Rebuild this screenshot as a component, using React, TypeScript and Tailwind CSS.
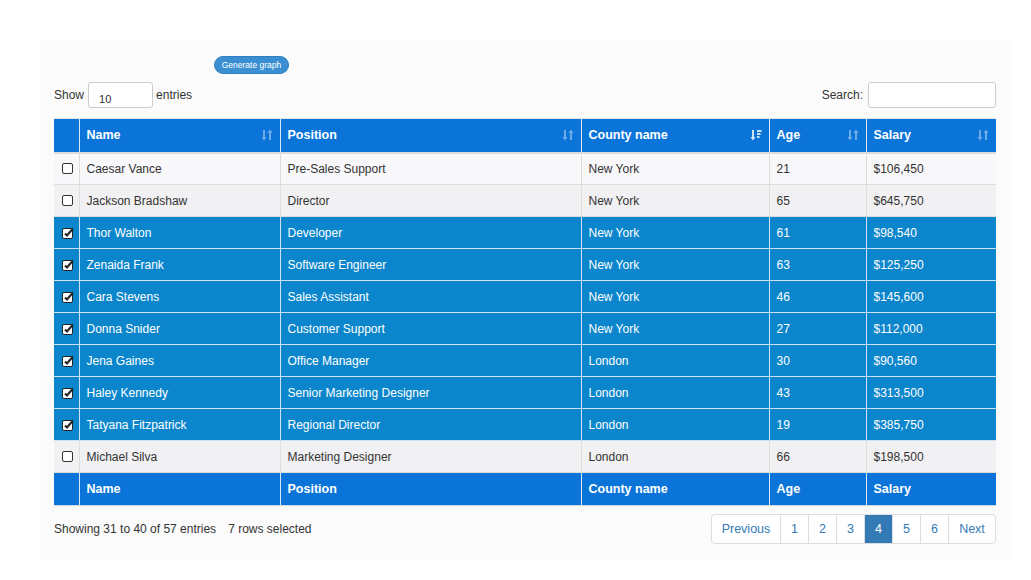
import React from "react";

type Row = { name: string; pos: string; county: string; age: string; salary: string; sel: boolean };

const rows: Row[] = [
  { name: "Caesar Vance", pos: "Pre-Sales Support", county: "New York", age: "21", salary: "$106,450", sel: false },
  { name: "Jackson Bradshaw", pos: "Director", county: "New York", age: "65", salary: "$645,750", sel: false },
  { name: "Thor Walton", pos: "Developer", county: "New York", age: "61", salary: "$98,540", sel: true },
  { name: "Zenaida Frank", pos: "Software Engineer", county: "New York", age: "63", salary: "$125,250", sel: true },
  { name: "Cara Stevens", pos: "Sales Assistant", county: "New York", age: "46", salary: "$145,600", sel: true },
  { name: "Donna Snider", pos: "Customer Support", county: "New York", age: "27", salary: "$112,000", sel: true },
  { name: "Jena Gaines", pos: "Office Manager", county: "London", age: "30", salary: "$90,560", sel: true },
  { name: "Haley Kennedy", pos: "Senior Marketing Designer", county: "London", age: "43", salary: "$313,500", sel: true },
  { name: "Tatyana Fitzpatrick", pos: "Regional Director", county: "London", age: "19", salary: "$385,750", sel: true },
  { name: "Michael Silva", pos: "Marketing Designer", county: "London", age: "66", salary: "$198,500", sel: false },
];

function SortIcon({ active }: { active?: boolean }) {
  return (
    <svg width="12" height="12" viewBox="0 0 12 12" className={active ? "opacity-80" : "opacity-40"}>
      <g fill="#ffffff">
        <rect x="2" y="1" width="2" height="8" />
        <polygon points="0.5,8 5.5,8 3,11.5" />
        {active ? (
          <>
            <rect x="7" y="1" width="4.5" height="2" />
            <rect x="7" y="4" width="3.5" height="2" />
            <rect x="7" y="7" width="2.5" height="2" />
          </>
        ) : (
          <>
            <rect x="8" y="3" width="2" height="8" />
            <polygon points="6.5,4 11.5,4 9,0.5" />
          </>
        )}
      </g>
    </svg>
  );
}

function Checkbox({ checked }: { checked: boolean }) {
  if (!checked)
    return <div className="w-[11px] h-[11px] border border-[#333] rounded-[2px] bg-white" />;
  return (
    <svg width="12" height="12" viewBox="0 0 12 12">
      <rect x="0.5" y="1.5" width="10" height="10" rx="1.5" fill="#ffffff" stroke="#222" strokeWidth="1" />
      <path d="M3 6.5 L5 8.5 L11 1.5" fill="none" stroke="#222" strokeWidth="2" />
    </svg>
  );
}

const cols = ["w-[25px]", "w-[201px]", "w-[301px]", "w-[188px]", "w-[97px]", "w-[130px]"];

export default function App() {
  const font = { fontFamily: '"Liberation Sans", Arial, Helvetica, sans-serif' };
  return (
    <div className="w-[1031px] h-[580px] bg-white pt-[40px] pl-[40px]" style={font}>
      <div className="w-[972px] h-[520px] bg-[#fbfbfb] pl-[14px] pt-[16px] text-[12px] text-[#333]">
        <div className="w-[942px]">
          <div className="h-[18px] flex">
            <button className="ml-[160px] h-[18px] w-[75px] rounded-full bg-[#3a8fd2] text-white text-[8.5px] leading-[16px] border border-[#2f7fc0]">
              Generate graph
            </button>
          </div>
          <div className="flex items-center justify-between h-[26px] mt-[8px]">
            <div className="flex items-center">
              <span>Show</span>
              <div className="ml-[4px] w-[65px] h-[26px] border border-[#ccc] rounded-[3px] bg-white text-[11px] pl-[10px] pt-[9px] leading-[14px]">10</div>
              <span className="ml-[3px]">entries</span>
            </div>
            <div className="flex items-center">
              <span>Search:</span>
              <div className="ml-[5px] w-[128px] h-[26px] border border-[#ccc] rounded-[3px] bg-white" />
            </div>
          </div>
          <table className="mt-[10px] w-[942px] border-collapse table-fixed">
            <colgroup>
              {cols.map((c, i) => (
                <col key={i} className={c} />
              ))}
            </colgroup>
            <thead>
              <tr className="h-[34px] bg-[#0b74d9] text-white font-bold text-[12.5px]">
                <th className="border-r border-r-[#d8e6f5] border-b-2 border-b-[#dcdcdc] border-t border-t-[#e4e4e4]" />
                {[
                  ["Name", false],
                  ["Position", false],
                  ["County name", true],
                  ["Age", false],
                  ["Salary", false],
                ].map(([t, a], i) => (
                  <th
                    key={i}
                    className="border-r border-r-[#d8e6f5] last:border-r-0 border-b-2 border-b-[#dcdcdc] border-t border-t-[#e4e4e4] text-left px-[7px]"
                  >
                    <div className="flex items-center justify-between">
                      <span>{t as string}</span>
                      <SortIcon active={a as boolean} />
                    </div>
                  </th>
                ))}
              </tr>
            </thead>
            <tbody>
              {rows.map((r, i) => {
                const bg = r.sel ? "bg-[#0b86cc] text-white" : i % 2 === 0 ? "bg-[#f8f7f9]" : "bg-[#f1f0f2]";
                const bd = r.sel ? "border-[#cfe3f2]" : "border-[#dddddd]";
                return (
                  <tr key={i} className={`h-[32px] ${bg}`}>
                    <td className={`border-r border-b ${bd} pl-[8px]`}>
                      <Checkbox checked={r.sel} />
                    </td>
                    <td className={`border-r border-b ${bd} px-[7px]`}>{r.name}</td>
                    <td className={`border-r border-b ${bd} px-[7px]`}>{r.pos}</td>
                    <td className={`border-r border-b ${bd} px-[7px]`}>{r.county}</td>
                    <td className={`border-r border-b ${bd} px-[7px]`}>{r.age}</td>
                    <td className={`border-b ${bd} px-[7px]`}>{r.salary}</td>
                  </tr>
                );
              })}
            </tbody>
            <tfoot>
              <tr className="h-[33px] bg-[#0b74d9] text-white font-bold text-[12.5px]">
                <td className="border-r border-r-[#d8e6f5] border-b border-b-[#cfd8e0]" />
                {["Name", "Position", "County name", "Age", "Salary"].map((t, i) => (
                  <td key={i} className="border-r border-r-[#d8e6f5] last:border-r-0 border-b border-b-[#cfd8e0] px-[7px]">
                    {t}
                  </td>
                ))}
              </tr>
            </tfoot>
          </table>
          <div className="flex items-center justify-between mt-[8px]">
            <div>
              Showing 31 to 40 of 57 entries<span className="ml-[12px]">7 rows selected</span>
            </div>
            <div className="flex h-[30px] border border-[#ddd] rounded-[4px] bg-white text-[#337ab7] text-[12.5px] overflow-hidden">
              {["Previous", "1", "2", "3", "4", "5", "6", "Next"].map((p, i) => (
                <div
                  key={i}
                  className={`flex items-center justify-center ${i > 0 ? "border-l border-[#ddd]" : ""} ${
                    p === "Previous" ? "w-[68px]" : p === "Next" ? "w-[47px]" : "w-[28px]"
                  } ${p === "4" ? "bg-[#337ab7] text-white border-[#337ab7]" : ""}`}
                >
                  {p}
                </div>
              ))}
            </div>
          </div>
        </div>
      </div>
    </div>
  );
}
